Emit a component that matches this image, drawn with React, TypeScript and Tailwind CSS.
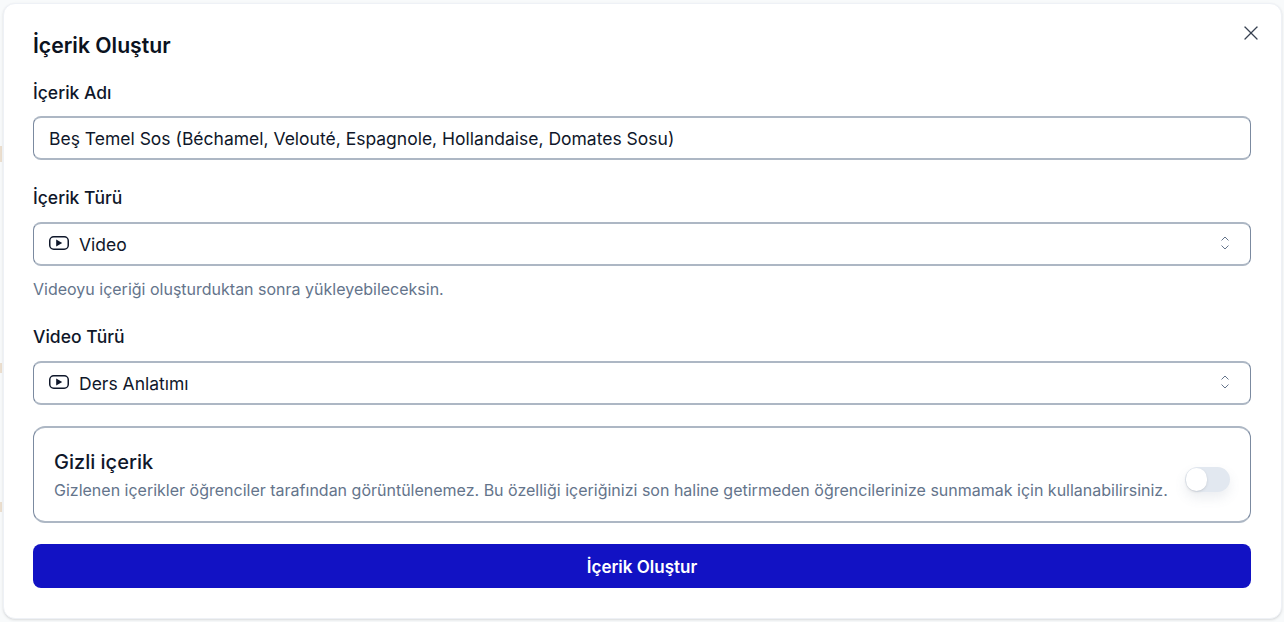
import { X } from 'lucide-react'

const boxBorder = 'border border-[#7b8aa0] border-t-2 border-b-2 border-t-[#adb7c4] border-b-[#adb7c4]'

function VideoIcon() {
  return (
    <svg width="20" height="14" viewBox="0 0 20 14" fill="none" className="shrink-0 mb-1">
      <rect x="0.75" y="0.75" width="18.5" height="12.5" rx="4" stroke="#0f172a" strokeWidth="1.5" />
      <path d="M7.2 3.4v7.2l6-3.6z" fill="#0f172a" />
    </svg>
  )
}

function UpDownIcon() {
  return (
    <svg width="8" height="14" viewBox="0 0 8 14" fill="none" className="shrink-0 mb-1">
      <path d="M.8 4.2 4 1l3.2 3.2M.8 9.8 4 13l3.2-3.2" stroke="#64748b" strokeWidth="1" strokeLinecap="round" strokeLinejoin="round" />
    </svg>
  )
}

function FieldLabel({ children }: { children: React.ReactNode }) {
  return <label className="block text-[17.5px] leading-6 font-medium text-[#0f172a]">{children}</label>
}

function SelectBox({ value }: { value: string }) {
  return (
    <div className={`mt-3 h-11 flex items-center gap-2.5 pl-[15px] pr-[21px] pt-0.5 rounded-lg bg-white ${boxBorder}`}>
      <VideoIcon />
      <span className="flex-1 text-[17.5px] text-[#0f172a]">{value}</span>
      <UpDownIcon />
    </div>
  )
}

export default function App() {
  return (
    <div className="relative h-[622px] bg-[#f8fafb] pl-[3px] pr-[2px] pt-[3px] overflow-hidden font-['Inter',sans-serif]">
      {/* bits of the page behind the modal, peeking out on the left edge */}
      <div className="absolute left-0 top-[146px] w-0.5 h-4 bg-[#ecdfcf]" />
      <div className="absolute left-0 top-[363px] w-0.5 h-2.5 bg-[#ecdfcf]" />
      <div className="absolute left-0 top-[502px] w-0.5 h-2.5 bg-[#ecdfcf]" />
      <div className="relative h-[616px] bg-white rounded-xl border border-[#eef1f6] shadow-sm pl-[29px] pr-[30px] pt-[25px]">
        <button className="absolute right-[18px] top-[17px] text-[#374151]">
          <X size={24} strokeWidth={1.3} />
        </button>
        <h2 className="text-[21.2px] leading-8 font-semibold text-[#0b1220]">İçerik Oluştur</h2>
        <div className="mt-5">
          <FieldLabel>İçerik Adı</FieldLabel>
          <div className={`mt-[11px] h-11 flex items-center px-[15px] pt-0.5 rounded-lg bg-white text-[17.5px] text-[#0f172a] ${boxBorder}`}>
            Beş Temel Sos (Béchamel, Velouté, Espagnole, Hollandaise, Domates Sosu)
          </div>
        </div>
        <div className="mt-[26px]">
          <FieldLabel>İçerik Türü</FieldLabel>
          <SelectBox value="Video" />
          <p className="mt-3 text-base leading-[22px] text-[#64748b]">Videoyu içeriği oluşturduktan sonra yükleyebileceksin.</p>
        </div>
        <div className="mt-[25px]">
          <FieldLabel>Video Türü</FieldLabel>
          <SelectBox value="Ders Anlatımı" />
        </div>
        <div className={`mt-[21px] h-[97px] flex items-center justify-between px-5 rounded-xl bg-white ${boxBorder}`}>
          <div>
            <div className="text-xl leading-7 font-medium text-[#0f172a]">Gizli içerik</div>
            <div className="mt-0.5 text-base leading-6 text-[#64748b]">
              Gizlenen içerikler öğrenciler tarafından görüntülenemez. Bu özelliği içeriğinizi son haline getirmeden öğrencilerinize sunmamak için kullanabilirsiniz.
            </div>
          </div>
          <div className="mt-[9px] w-[45px] h-[25px] rounded-full bg-[#e2e8f0] p-px shadow-[0_6px_12px_rgba(100,116,139,0.12)]">
            <div className="w-[21px] h-[23px] rounded-full bg-white shadow-sm" />
          </div>
        </div>
        <button className="mt-[21px] w-full h-11 pt-1 rounded-lg bg-[#1212c4] text-[17px] font-semibold text-white">İçerik Oluştur</button>
      </div>
    </div>
  )
}
